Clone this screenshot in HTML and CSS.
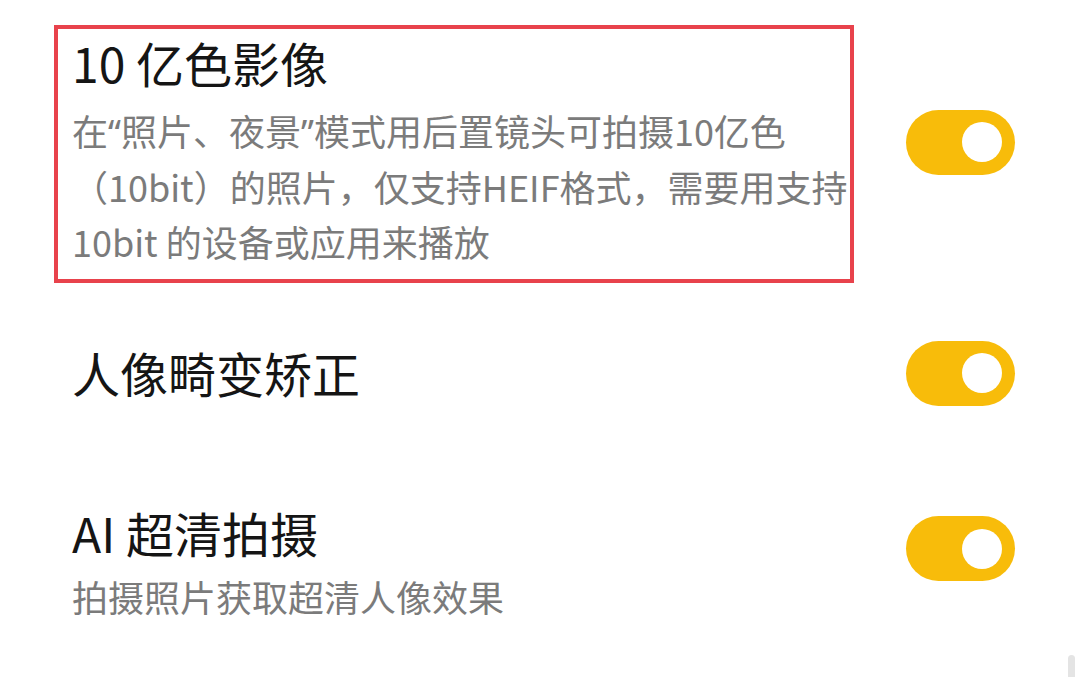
FILE: index.html
```html
<!DOCTYPE html>
<html lang="zh-CN">
<head>
<meta charset="utf-8">
<title>相机设置</title>
<link rel="stylesheet" href="styles.css">
</head>
<body>
<div class="screen">
  <div class="list">
    <div class="row row-first">
      <div class="text highlight">
        <div class="title">10 亿色影像</div>
        <div class="desc">在<span class="q">“</span>照片、夜景<span class="q">”</span>模式用后置镜头可拍摄10亿色<br>（10bit）的照片，仅支持HEIF格式，需要用支持<br>10bit 的设备或应用来播放</div>
      </div>
      <div class="toggle toggle-up1"><span class="knob"></span></div>
    </div>
    <div class="row row-single">
      <div class="text">
        <div class="title">人像畸变矫正</div>
      </div>
      <div class="toggle"><span class="knob"></span></div>
    </div>
    <div class="row">
      <div class="text">
        <div class="title">AI 超清拍摄</div>
        <div class="desc desc-tight">拍摄照片获取超清人像效果</div>
      </div>
      <div class="toggle toggle-up3"><span class="knob"></span></div>
    </div>
  </div>
  <div class="scrollbar"></div>
</div>
</body>
</html>
```
FILE: styles.css
```css
html, body {
  margin: 0;
  padding: 0;
  background: #ffffff;
}

.screen {
  position: relative;
  width: 1080px;
  height: 677px;
  overflow: hidden;
  font-family: "Noto Sans CJK SC", "Noto Sans", sans-serif;
}

.list {
  margin-top: -3px;
  padding: 0 65px 0 54px;
}

.row {
  display: flex;
  align-items: center;
  justify-content: space-between;
  padding: 28px 0;
}

.row-first {
  padding-bottom: 24px;
}

.row-single {
  padding-bottom: 55px;
}

.text {
  box-sizing: border-box;
  width: 800px;
  border: 4px solid transparent;
  padding: 3px 4px 6px 14px;
}

.highlight {
  border-color: #e8424c;
  padding-bottom: 9px;
}

.title {
  font-size: 48px;
  line-height: 60px;
  color: #151515;
  white-space: nowrap;
}

.desc {
  margin-top: 11px;
  font-size: 36px;
  line-height: 55.5px;
  color: #7b7b7b;
  white-space: nowrap;
}

.desc-tight {
  margin-top: 7px;
}

.q {
  font-family: "Noto Sans", sans-serif;
  line-height: 1;
}

.toggle {
  flex: none;
  width: 109px;
  height: 65px;
  border-radius: 33px;
  background: #f8bc0a;
  display: flex;
  align-items: center;
  justify-content: flex-end;
  padding-right: 13px;
  box-sizing: border-box;
}

.toggle-up1 {
  margin-bottom: 23px;
}

.toggle-up3 {
  margin-bottom: 31px;
}

.knob {
  width: 40px;
  height: 40px;
  border-radius: 50%;
  background: #ffffff;
}

.scrollbar {
  position: absolute;
  left: 1068px;
  top: 655px;
  width: 7px;
  height: 30px;
  border-radius: 4px;
  background: #e4e4e4;
}
```
